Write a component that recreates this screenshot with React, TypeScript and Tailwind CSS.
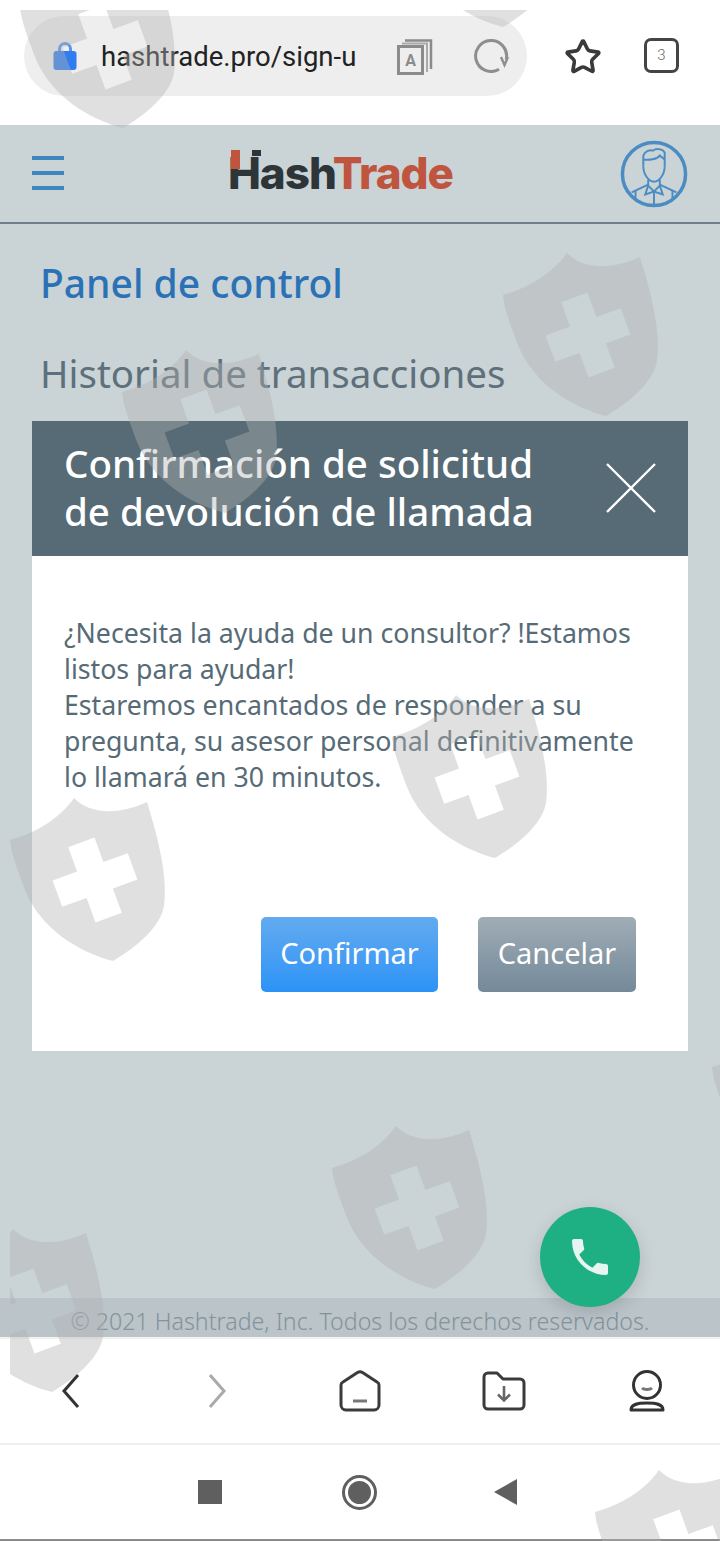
import { FC } from "react";
import { Star } from "lucide-react";
import { MdLocalPhone } from "react-icons/md";

const SHIELD =
  "M64 0C76 13 102 20 137 4C148 40 158 78 154 108C150 130 125 150 103 163C68 154 30 130 15 92C6 68 1 54 0 42C26 35 50 20 64 0Z";

// cross is cut out of the shield, tilted like the watermark
const CROSS_POINTS = [
  [-14, -40], [14, -40], [14, -14], [40, -14], [40, 14], [14, 14],
  [14, 40], [-14, 40], [-14, 14], [-40, 14], [-40, -14], [-14, -14],
];
const CROSS =
  "M" +
  CROSS_POINTS.map(([x, y]) => {
    const px = 85 + x * 0.94 + y * 0.342;
    const py = 82 - x * 0.342 + y * 0.94;
    return `${px.toFixed(1)} ${py.toFixed(1)}`;
  }).join("L") +
  "Z";

const SHIELDS = [
  { x: 20, y: -35 },
  { x: 400, y: -136 },
  { x: 503, y: 253 },
  { x: 122, y: 350 },
  { x: 392, y: 695 },
  { x: 10, y: 798 },
  { x: 712, y: 1025 },
  { x: 332, y: 1126 },
  { x: -51, y: 1229 },
  { x: 595, y: 1470 },
];

const Watermarks: FC = () => (
  <div className="absolute left-[10px] top-[10px] right-0 bottom-0 overflow-hidden pointer-events-none">
    {SHIELDS.map((s) => (
      <svg
        key={`${s.x}-${s.y}`}
        width="155"
        height="164"
        viewBox="0 0 155 164"
        className="absolute"
        style={{ left: s.x - 10, top: s.y - 10 }}
      >
        <path d={SHIELD + CROSS} fill="#b2b2b2" fillOpacity="0.4" fillRule="evenodd" />
      </svg>
    ))}
  </div>
);

const AddressBar: FC = () => (
  <div className="h-[125px] shrink-0 bg-white flex items-start pt-[16px] pl-[24px]">
    <div className="w-[503px] h-[80px] rounded-full bg-[#eeeeee] flex items-center">
      <svg width="24" height="30" viewBox="0 0 24 30" className="ml-[29px] mt-[-1px]">
        <path d="M6.5 11V8a5.5 5.5 0 0 1 11 0v3" fill="none" stroke="#5b93e8" strokeWidth="3" />
        <rect x="0.5" y="10" width="23" height="19" rx="3" fill="#2f7df0" />
      </svg>
      <span className="ml-[24px] mt-[2px] w-[257px] whitespace-nowrap font-['Roboto',sans-serif] text-[27.5px] text-[#222222]">
        hashtrade.pro/sign-u
      </span>
      <svg width="36" height="36" viewBox="0 0 36 36" className="ml-[39px] mt-[1px]" fill="none" stroke="#8b8b8b">
        <path d="M8 1.500H34V30" strokeWidth="2.500" />
        <path d="M5 4.500H30V33" strokeWidth="2" strokeOpacity="0.7" />
        <rect x="1.500" y="7.500" width="24" height="27" strokeWidth="3" fill="#eeeeee" />
        <text x="13.500" y="27" textAnchor="middle" fontFamily="Roboto, sans-serif" fontWeight="700" fontSize="16" fill="#8b8b8b" stroke="none">
          A
        </text>
      </svg>
      <svg width="36" height="34" viewBox="0 0 36 34" className="ml-[40px]" fill="none" stroke="#8e8e8e" strokeWidth="3">
        <path d="M33.200 20.500A15.500 15.500 0 1 0 26 30.300" />
        <path d="M28 18L31.500 26L35 18" strokeWidth="2.400" />
      </svg>
    </div>
    <Star size={38} strokeWidth={2.3} className="ml-[37px] mt-[22px] text-[#3a3a3a]" />
    <div className="ml-[42px] mt-[22px] w-[35px] h-[35px] rounded-[7px] border-[3px] border-[#444444] flex items-center justify-center font-['Roboto',sans-serif] font-light text-[15px] text-[#666666]">
      3
    </div>
  </div>
);

const Avatar: FC = () => (
  <svg width="68" height="68" viewBox="0 0 70 70" fill="none" stroke="#4b8cc2" strokeWidth="2">
    <circle cx="35" cy="35" r="32.5" strokeWidth="3.6" />
    <path d="M24 27V16C26 11 31 10 34 11C37 8 44 9 46 13L46 27" />
    <path d="M24 20C30 21 38 20 41 16C43 18 45 19 46 20" />
    <path d="M24 27C24 36 30 43 35 43C40 43 46 36 46 27" />
    <path d="M29 41V47L35 53L41 47V41" />
    <path d="M29 46L12 54" />
    <path d="M41 46L58 54" />
    <path d="M29 47L26 56L35 53L44 56L41 47" />
    <path d="M35 53V67" />
    <path d="M16 52V61M54 52V61" />
  </svg>
);

const Logo: FC = () => (
  <div className="relative font-['Inter',sans-serif] font-extrabold text-[44px] leading-[44px] tracking-[-1px] whitespace-nowrap">
    <span className="text-[#2d3538]">Hash</span>
    <span className="text-[#c0553f]">Trade</span>
    <div className="absolute left-[3px] top-[-1px] w-[9px] h-[19px] bg-[#c0553f]" />
    <div className="absolute left-[24px] top-[-1px] w-[9px] h-[6px] bg-[#2d3538]" />
  </div>
);

const Header: FC = () => (
  <header className="h-[99px] shrink-0 border-b-[2px] border-[#6f7f89] flex items-center justify-between pl-[32px] pr-[32px]">
    <div className="w-[32px] mt-[-2px] flex flex-col gap-[11px]">
      <div className="h-[4px] bg-[#3f86c0]" />
      <div className="h-[4px] bg-[#3f86c0]" />
      <div className="h-[4px] bg-[#3f86c0]" />
    </div>
    <div className="ml-[-3px] mt-[-2px]">
      <Logo />
    </div>
    <Avatar />
  </header>
);

const Dialog: FC = () => (
  <div className="absolute left-[32px] top-[421px] w-[656px] h-[630px] bg-white flex flex-col">
    <div className="h-[135px] bg-[#566b76] flex items-center justify-between pl-[32px] pr-[31px]">
      <h2 className="mt-[-3px] text-white text-[38.5px] leading-[48px] font-medium whitespace-nowrap">
        Confirmación de solicitud
        <br />
        de devolución de llamada
      </h2>
      <svg width="52" height="52" viewBox="0 0 52 52" stroke="#ffffff" strokeWidth="2.4" className="mt-[-2px]">
        <path d="M2 2L50 50M50 2L2 50" />
      </svg>
    </div>
    <p className="pl-[32px] pt-[59px] text-[26.7px] leading-[36px] text-[#566b76] whitespace-nowrap">
      ¿Necesita la ayuda de un consultor? !Estamos
      <br />
      listos para ayudar!
      <br />
      Estaremos encantados de responder a su
      <br />
      pregunta, su asesor personal definitivamente
      <br />
      lo llamará en 30 minutos.
    </p>
    <div className="mt-[122px] flex justify-end gap-[40px] pr-[52px]">
      <button className="w-[177px] h-[75px] pb-[3px] rounded-[5px] bg-gradient-to-b from-[#62aaf0] to-[#2a93f6] text-white text-[29px]">
        Confirmar
      </button>
      <button className="w-[158px] h-[75px] pb-[3px] rounded-[5px] bg-gradient-to-b from-[#a0adb5] to-[#74899a] text-white text-[29px]">
        Cancelar
      </button>
    </div>
  </div>
);

const BrowserNav: FC = () => (
  <nav className="h-[108px] shrink-0 bg-white border-t-[2px] border-b-[2px] border-t-[#f2f2f2] border-b-[#f0f0f0] flex items-center pl-[61px]">
    <svg width="20" height="36" viewBox="0 0 20 36" fill="none" stroke="#333333" strokeWidth="3">
      <path d="M17 2L3 18L17 34" />
    </svg>
    <svg width="20" height="36" viewBox="0 0 20 36" fill="none" stroke="#aaaaaa" strokeWidth="3" className="ml-[126px]">
      <path d="M3 2L17 18L3 34" />
    </svg>
    <svg width="42" height="42" viewBox="0 0 42 42" fill="none" stroke="#3b3b3b" strokeWidth="3" className="ml-[112px]">
      <path d="M2 15Q2 13 4 12L18.500 2.500Q21 1 23.500 2.500L38 12Q40 13 40 15V35A5 5 0 0 1 35 40H7A5 5 0 0 1 2 35Z" strokeLinejoin="round" />
      <path d="M14 31H28" stroke="#777777" />
    </svg>
    <svg width="44" height="40" viewBox="0 0 44 40" fill="none" stroke="#3b3b3b" strokeWidth="3" className="ml-[101px]">
      <path d="M2 6A4 4 0 0 1 6 2H15L21 8H38A4 4 0 0 1 42 12V34A4 4 0 0 1 38 38H6A4 4 0 0 1 2 34Z" strokeLinejoin="round" />
      <path d="M22 15V29M16 23.500L22 29.500L28 23.500" stroke="#666666" strokeWidth="2.6" />
    </svg>
    <svg width="38" height="42" viewBox="0 0 38 42" fill="none" stroke="#333333" strokeWidth="3" className="ml-[103px]">
      <ellipse cx="18" cy="15" rx="13.500" ry="13.500" />
      <path d="M13 18C15 20 21 20 23 18" stroke="#777777" />
      <path d="M2 40C2 34 9 33 18 33C27 33 34 34 34 40Z" strokeLinejoin="round" />
    </svg>
  </nav>
);

const SystemBar: FC = () => (
  <div className="h-[96px] shrink-0 bg-white border-b-[2px] border-[#8a8a8a] flex items-center pl-[198px]">
    <div className="w-[24px] h-[24px] bg-[#5f5f5f]" />
    <div className="ml-[120px] w-[35px] h-[35px] rounded-full border-[3px] border-[#5f5f5f] flex items-center justify-center">
      <div className="w-[23px] h-[23px] rounded-full bg-[#5f5f5f]" />
    </div>
    <svg width="24" height="26" viewBox="0 0 24 26" className="ml-[117px]">
      <path d="M23 0V26L0 13Z" fill="#5f5f5f" />
    </svg>
  </div>
);

export default function App() {
  return (
    <div className="relative w-[720px] h-[1541px] overflow-hidden bg-white flex flex-col font-['Noto_Sans',sans-serif]">
      <AddressBar />
      <main className="flex-1 bg-[#cad3d6] flex flex-col">
        <Header />
        <div className="flex-1 pl-[40px] pt-[33px] text-[39px] leading-[52px] font-medium">
          <div className="text-[#2a72b5]">Panel de control</div>
          <div className="mt-[38px] text-[38.5px] text-[#5d707b] font-normal">Historial de transacciones</div>
        </div>
        <footer className="h-[39px] bg-[#bac4c9] flex items-end justify-center text-[23.2px] leading-[31px] font-light text-[#84929c] whitespace-nowrap">
          © 2021 Hashtrade, Inc. Todos los derechos reservados.
        </footer>
      </main>
      <BrowserNav />
      <SystemBar />
      <Dialog />
      <button className="absolute left-[540px] top-[1207px] w-[100px] h-[100px] rounded-full bg-[#1eb083] shadow-[0_6px_18px_rgba(0,0,0,0.14)] flex items-center justify-center text-[#e6f5ef]">
        <MdLocalPhone size={48} />
      </button>
      <Watermarks />
    </div>
  );
}
